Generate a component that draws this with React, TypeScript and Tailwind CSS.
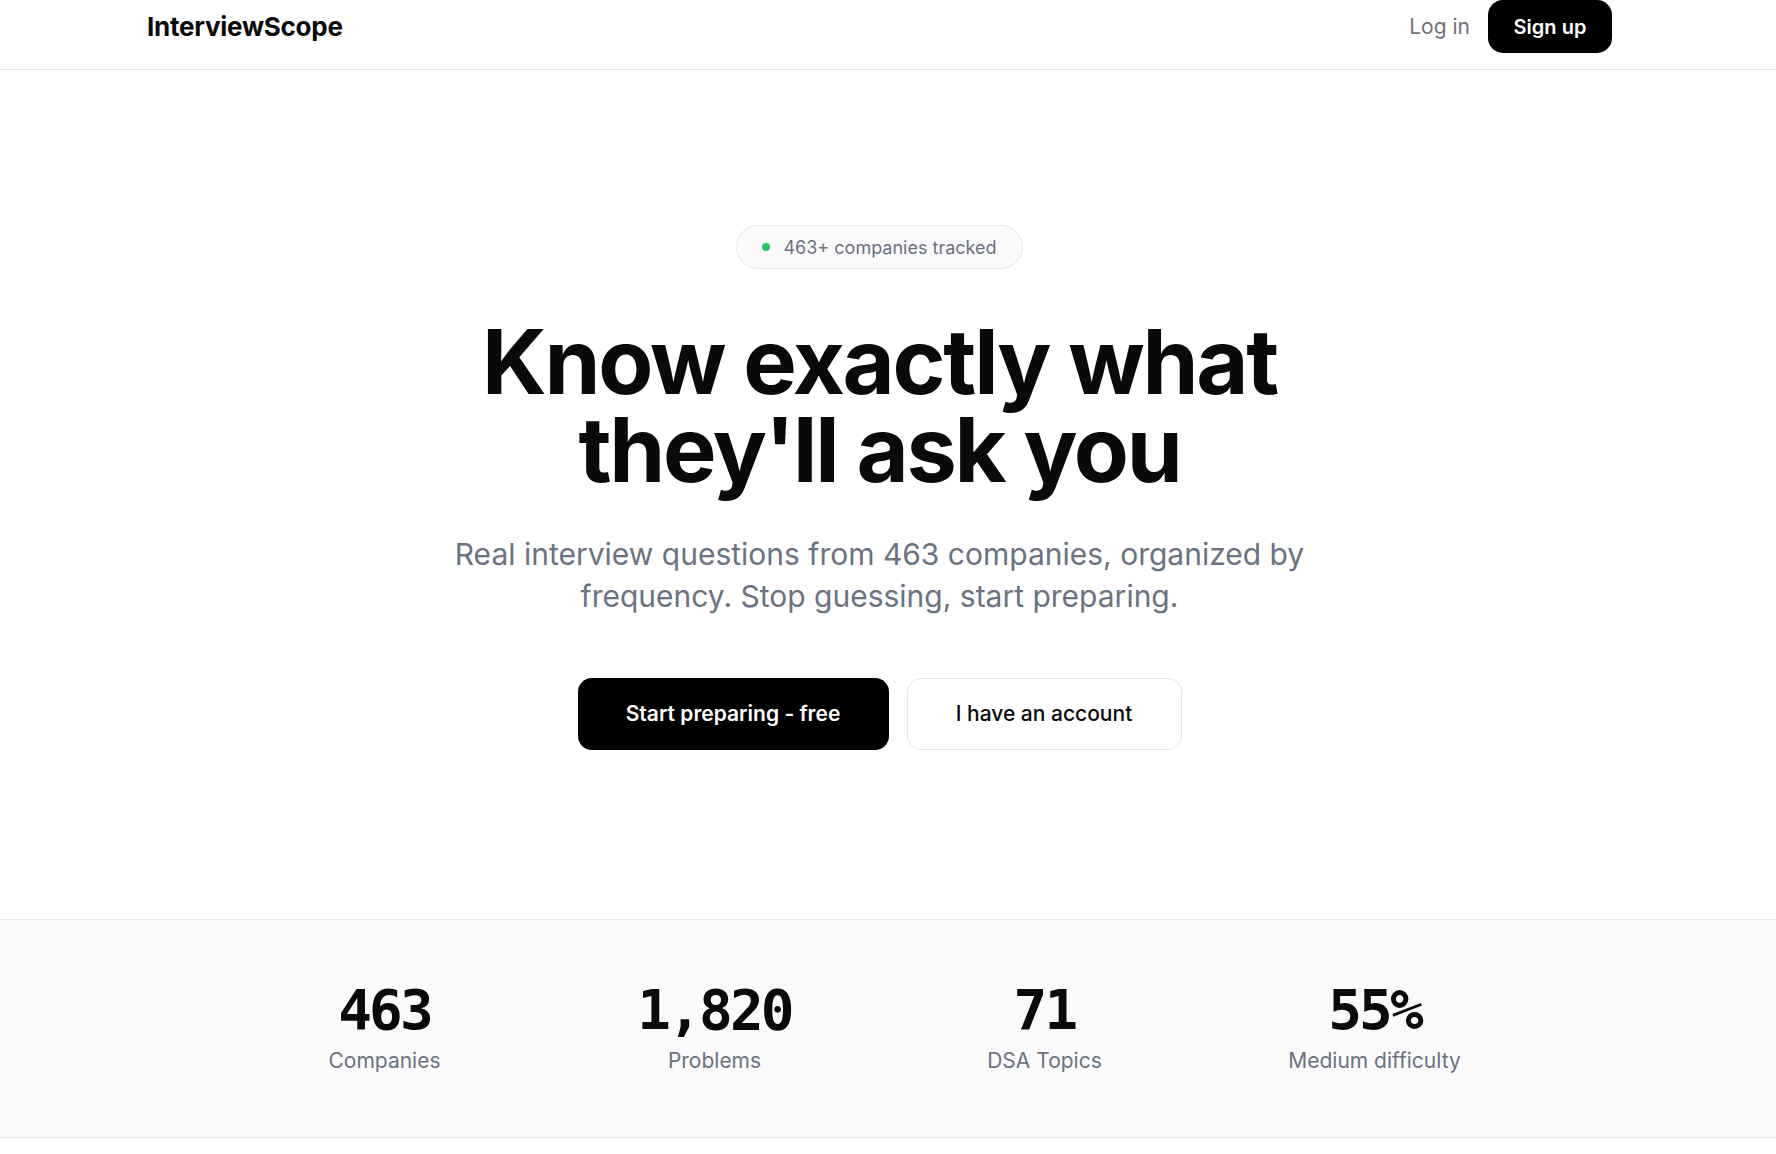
import React from 'react';

const stats = [
  { value: '463', label: 'Companies' },
  { value: '1,820', label: 'Problems' },
  { value: '71', label: 'DSA Topics' },
  { value: '55%', label: 'Medium difficulty' },
];

export default function App() {
  return (
    <div className="min-h-screen bg-white text-[#0a0a0a] font-['Inter',_'Noto_Sans',_sans-serif]">
      {/* Header */}
      <header className="border-b border-[#e5e7eb] pr-[17px]">
        <div className="max-w-[1465px] mx-auto h-[53px] mb-[16px] flex items-center justify-between">
          <a href="#" className="text-[26px] font-bold tracking-[-0.01em] leading-none">
            InterviewScope
          </a>
          <nav className="flex items-center gap-[18px]">
            <a href="#" className="text-[21px] text-[#71717a]">
              Log in
            </a>
            <button className="h-[53px] w-[124px] rounded-[15px] bg-black text-white text-[20px] font-semibold">
              Sign up
            </button>
          </nav>
        </div>
      </header>

      {/* Hero */}
      <section className="pr-[17px] pt-[155px] pb-[169px] flex flex-col items-center text-center">
        <div className="h-[44px] px-[25px] flex items-center gap-[13px] rounded-full border border-[#e5e7eb] bg-[#fafafa]">
          <span className="w-2 h-2 rounded-full bg-[#22c55e]" />
          <span className="text-[18px] text-[#6b7280]">463+ companies tracked</span>
        </div>

        <h1 className="mt-[49px] text-[90px] leading-[88px] font-bold tracking-[-0.025em]">
          Know exactly what
          <br />
          they'll ask you
        </h1>

        <p className="mt-[39px] max-w-[900px] text-[30px] leading-[42px] text-[#6b7280]">
          Real interview questions from 463 companies, organized by frequency. Stop guessing, start preparing.
        </p>

        <div className="mt-[61px] flex items-center gap-[18px]">
          <button className="h-[72px] w-[311px] rounded-[14px] bg-black text-white text-[21px] font-semibold">
            Start preparing - free
          </button>
          <button className="h-[72px] w-[275px] rounded-[14px] border border-[#e5e7eb] bg-white text-[21px] font-medium">
            I have an account
          </button>
        </div>
      </section>

      {/* Stats */}
      <section className="pr-[17px] border-y border-[#e5e7eb] bg-[#fafafa] pt-[62px] pb-[62px]">
        <div className="max-w-[1280px] mx-auto grid grid-cols-4 gap-10 text-center">
          {stats.map((s) => (
            <div key={s.label} className="flex flex-col items-center gap-[9px]">
              <div className="font-['DejaVu_Sans_Mono',_monospace] font-bold text-[56px] leading-[56px] tracking-[-0.05em]">
                {s.value}
              </div>
              <div className="text-[21px] leading-[28px] text-[#6b7280]">{s.label}</div>
            </div>
          ))}
        </div>
      </section>
    </div>
  );
}
